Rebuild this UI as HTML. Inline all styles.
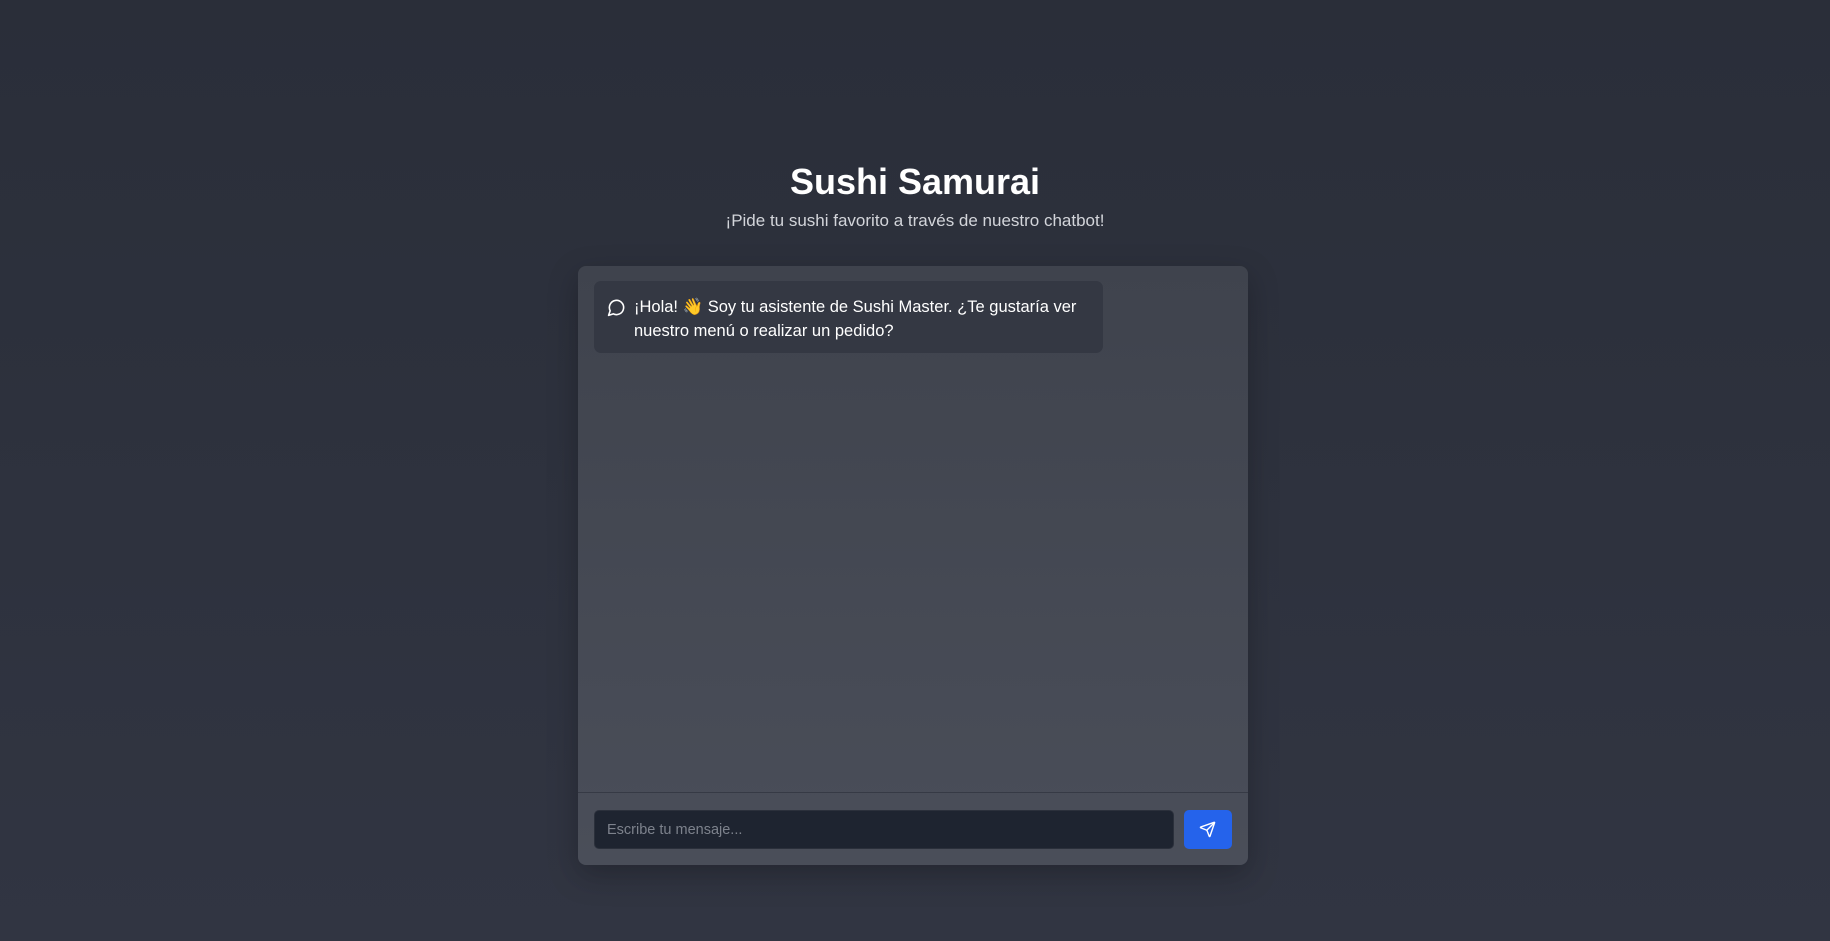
<!DOCTYPE html>
<html><head><meta charset="utf-8"><style>
html,body{margin:0;height:100%;}
body{width:1830px;height:941px;background:linear-gradient(#2a2e39,#313542);font-family:"Liberation Sans",sans-serif;position:relative;overflow:hidden;}
h1{position:absolute;top:160px;left:0;width:1830px;text-align:center;margin:0;color:#fff;font-size:36px;font-weight:bold;line-height:44px;}
.sub{position:absolute;top:209px;left:0;width:1830px;text-align:center;color:#d3d5da;font-size:17px;line-height:24px;}
.card{position:absolute;left:578px;top:266px;width:670px;height:599px;border-radius:8px;background:linear-gradient(#3f434d,#4a4e59);box-shadow:0 10px 30px rgba(0,0,0,.25);overflow:hidden;}
.bubble{position:absolute;left:16px;top:15px;width:509px;height:72px;background:#343843;border-radius:7px;box-sizing:border-box;padding:14px 12px 0 40px;color:#fff;font-size:16.5px;line-height:24px;}
.bubble svg{position:absolute;left:13px;top:17px;}
.foot{position:absolute;left:0;top:526px;width:670px;height:73px;border-top:1px solid #363a45;}
.inp{position:absolute;left:16px;top:17px;width:580px;height:39px;background:#1e2430;border:1px solid #2b303b;border-radius:5px;box-sizing:border-box;color:#7d828c;font-size:14.5px;line-height:39px;padding-left:12px;}
.btn{position:absolute;left:606px;top:17px;width:48px;height:39px;background:#2563eb;border-radius:5px;}
.btn svg{position:absolute;left:15px;top:11px;}
</style></head><body>
<h1>Sushi Samurai</h1>
<div class="sub">¡Pide tu sushi favorito a través de nuestro chatbot!</div>
<div class="card">
<div class="bubble"><svg width="19" height="19" viewBox="0 0 24 24" fill="none" stroke="#fff" stroke-width="2" stroke-linecap="round" stroke-linejoin="round"><path d="M7.9 20A9 9 0 1 0 4 16.1L2 22Z"/></svg>¡Hola! 👋 Soy tu asistente de Sushi Master. ¿Te gustaría ver nuestro menú o realizar un pedido?</div>
<div class="foot">
<div class="inp">Escribe tu mensaje...</div>
<div class="btn"><svg width="17" height="17" viewBox="0 0 24 24" fill="none" stroke="#fff" stroke-width="2" stroke-linecap="round" stroke-linejoin="round"><path d="M14.5 21.7a.5.5 0 0 0 .9 0L22 2.5a.5.5 0 0 0-.6-.6L2.3 8.6a.5.5 0 0 0 0 .9l8 3.2a2 2 0 0 1 1.1 1.1z"/><path d="m21.9 2.1-10.9 10.9"/></svg></div>
</div>
</div>
</body></html>
